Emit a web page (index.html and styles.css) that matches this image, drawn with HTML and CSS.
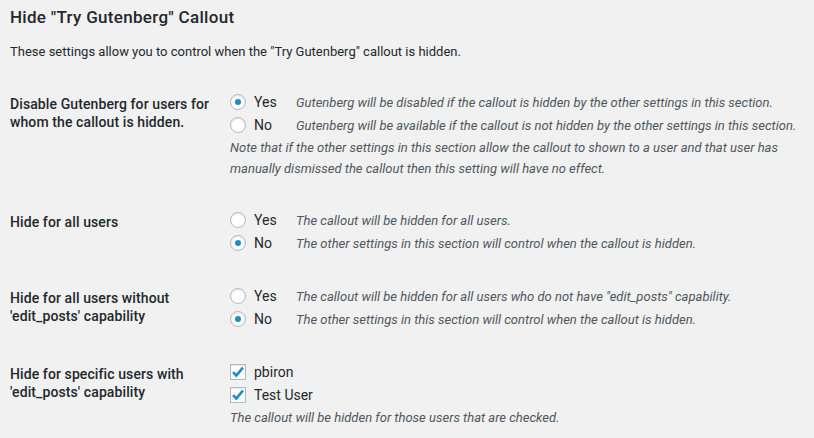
FILE: index.html
```html
<!DOCTYPE html>
<html>
<head>
<meta charset="utf-8">
<link rel="stylesheet" href="styles.css">
</head>
<body>
<div class="wrap">
  <h2 class="title">Hide "Try Gutenberg" Callout</h2>
  <p class="intro">These settings allow you to control when the "Try Gutenberg" callout is hidden.</p>
  <table class="form-table">
    <tr>
      <th>Disable Gutenberg for users for whom the callout is hidden.</th>
      <td>
        <div class="opt"><span class="radio checked"></span><span class="lbl">Yes</span><span class="desc">Gutenberg will be disabled if the callout is hidden by the other settings in this section.</span></div>
        <div class="opt"><span class="radio"></span><span class="lbl">No</span><span class="desc">Gutenberg will be available if the callout is not hidden by the other settings in this section.</span></div>
        <p class="note"><span class="line">Note that if the other settings in this section allow the callout to shown to a user and that user has</span><span class="line">manually dismissed the callout then this setting will have no effect.</span></p>
      </td>
    </tr>
    <tr>
      <th>Hide for all users</th>
      <td>
        <div class="opt"><span class="radio"></span><span class="lbl">Yes</span><span class="desc">The callout will be hidden for all users.</span></div>
        <div class="opt"><span class="radio checked"></span><span class="lbl">No</span><span class="desc">The other settings in this section will control when the callout is hidden.</span></div>
      </td>
    </tr>
    <tr>
      <th>Hide for all users without 'edit_posts' capability</th>
      <td>
        <div class="opt"><span class="radio"></span><span class="lbl">Yes</span><span class="desc">The callout will be hidden for all users who do not have "edit_posts" capability.</span></div>
        <div class="opt"><span class="radio checked"></span><span class="lbl">No</span><span class="desc">The other settings in this section will control when the callout is hidden.</span></div>
      </td>
    </tr>
    <tr>
      <th>Hide for specific users with 'edit_posts' capability</th>
      <td>
        <div class="opt"><span class="check"><svg viewBox="0 0 16 16" width="16" height="16"><path d="M3 8.2 L6.3 11.5 L12.9 3.6" fill="none" stroke="#1e8cbe" stroke-width="2.6" stroke-linecap="butt" stroke-linejoin="miter"/></svg></span><span class="lbl">pbiron</span></div>
        <div class="opt"><span class="check"><svg viewBox="0 0 16 16" width="16" height="16"><path d="M3 8.2 L6.3 11.5 L12.9 3.6" fill="none" stroke="#1e8cbe" stroke-width="2.6" stroke-linecap="butt" stroke-linejoin="miter"/></svg></span><span class="lbl">Test User</span></div>
        <p class="note">The callout will be hidden for those users that are checked.</p>
      </td>
    </tr>
  </table>
</div>
</body>
</html>
```

FILE: styles.css
```css
html, body {
  margin: 0;
  padding: 0;
  background: #f1f1f1;
}
body {
  font-family: Roboto, "Noto Sans", sans-serif;
  color: #23282d;
  font-size: 13px;
}
.wrap {
  padding: 0 10px;
}
.title {
  font-size: 17px;
  font-weight: 500;
  letter-spacing: 0.3px;
  line-height: 22px;
  margin: 6px 0 0;
}
.intro {
  font-size: 13px;
  line-height: 19.5px;
  margin: 14px 0 13px;
}
.form-table {
  border-collapse: collapse;
  table-layout: fixed;
  width: 100%;
}
.form-table th {
  width: 200px;
  padding: 20px 10px 20px 0;
  text-align: left;
  vertical-align: top;
  font-size: 14px;
  font-weight: 500;
  letter-spacing: 0.1px;
  line-height: 1.3;
}
.form-table td {
  padding: 16px 10px 14px;
  vertical-align: top;
  font-size: 14px;
}
.opt {
  display: flex;
  align-items: center;
  height: 23px;
  white-space: nowrap;
}
.radio, .check {
  flex: none;
  width: 14px;
  height: 14px;
  border: 1px solid #b4b9be;
  background: #fff;
  box-shadow: inset 0 1px 2px rgba(0,0,0,.1);
  margin-right: 8px;
  position: relative;
}
.radio {
  border-radius: 50%;
}
.radio.checked::before {
  content: "";
  position: absolute;
  left: 4px;
  top: 4px;
  width: 6px;
  height: 6px;
  border-radius: 50%;
  background: #1e8cbe;
}
.check svg {
  position: absolute;
  left: -1px;
  top: -1px;
}
.lbl {
  width: 42px;
  flex: none;
}
.desc {
  font-size: 13px;
  font-style: italic;
  color: #50575e;
}
.note {
  margin: 0;
  font-size: 13px;
  font-style: italic;
  line-height: 21px;
  color: #50575e;
}
.note .line {
  display: block;
  white-space: nowrap;
}
```
